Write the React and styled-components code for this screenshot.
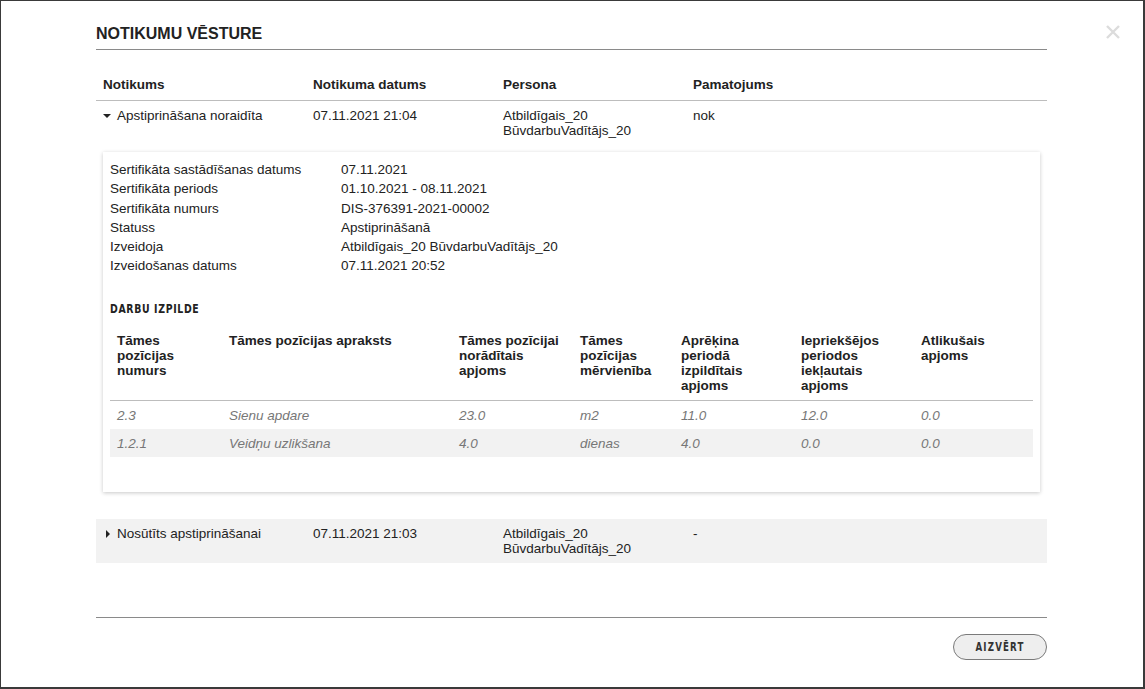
import React from "react";
import styled, { createGlobalStyle } from "styled-components";

const Global = createGlobalStyle`
  html, body { margin: 0; padding: 0; background: #fff; }
  body { font-family: "Liberation Sans", Arial, sans-serif; color: #222; }
  * { box-sizing: border-box; }
`;

const Frame = styled.div`
  width: 1145px;
  height: 689px;
  border-style: solid;
  border-color: #3a3a3a;
  border-width: 1px 2px 2px 1px;
  background: #fff;
  position: relative;
  padding: 0 96px 0 95px;
  display: flex;
  flex-direction: column;
  overflow: hidden;
`;

const Title = styled.h2`
  margin: 0;
  padding-top: 23px;
  height: 49px;
  font-size: 16px;
  font-weight: bold;
  color: #222;
  line-height: 20px;
  border-bottom: 1px solid #8a8a8a;
`;

const Close = styled.button`
  position: absolute;
  top: 23px;
  right: 22px;
  width: 16px;
  height: 16px;
  padding: 0;
  border: none;
  background: transparent;
  cursor: pointer;
`;

const Grid = styled.div`
  display: grid;
  grid-template-columns: 210px 190px 190px 1fr;
  font-size: 13.5px;
  line-height: 15px;
  background: ${(p) => (p.$shaded ? "#f2f2f2" : "transparent")};
  border-bottom: ${(p) => (p.$head ? "1px solid #bdbdbd" : "none")};
  margin-top: ${(p) => (p.$head ? "20px" : "0")};
  font-weight: ${(p) => (p.$head ? "bold" : "normal")};
`;

const Cell = styled.div`
  padding: 7px 7px;
  min-height: 44px;
  ${(p) => p.$head && "min-height: 0; padding: 7px 7px 8px;"}
  display: flex;
  align-items: flex-start;
  gap: 4px;
`;

const Caret = styled.span`
  display: inline-block;
  width: 10px;
  height: 15px;
  flex: none;
  position: relative;
  &::before {
    content: "";
    position: absolute;
    ${(p) =>
      p.$open
        ? `left: 0; top: 6px; border-left: 4px solid transparent; border-right: 4px solid transparent; border-top: 4px solid #222;`
        : `left: 3px; top: 4px; border-top: 4px solid transparent; border-bottom: 4px solid transparent; border-left: 4px solid #222;`}
  }
`;

const Card = styled.div`
  margin: 7px 7px 27px;
  background: #fff;
  box-shadow: 0 1px 4px rgba(0, 0, 0, 0.22);
  padding: 8px 7px 35px;
`;

const InfoGrid = styled.div`
  display: grid;
  grid-template-columns: 231px 1fr;
  font-size: 13.5px;
  line-height: 19.3px;
  color: #222;
`;

const Condensed = styled.span`
  display: inline-block;
  font-family: "DejaVu Sans", sans-serif;
  font-weight: bold;
  transform: scaleX(0.72);
  transform-origin: ${(p) => (p.$center ? "center" : "left")} center;
  white-space: nowrap;
`;

const SectionTitle = styled.div`
  margin-top: 26px;
  font-size: 13px;
  letter-spacing: 0.9px;
  line-height: 14px;
  color: #222;
`;

const WorkTable = styled.div`
  margin-top: 10px;
  display: grid;
  grid-template-columns: 112px 230px 121px 101px 120px 120px 1fr;
  font-size: 13.5px;
  line-height: 15px;
`;

const Th = styled.div`
  font-weight: bold;
  padding: 7px 7px 7px;
  border-bottom: 1px solid #bdbdbd;
  color: #222;
`;

const Td = styled.div`
  font-style: italic;
  color: #777;
  padding: 7px 7px 6px;
  height: 28px;
  background: ${(p) => (p.$shaded ? "#f2f2f2" : "transparent")};
`;

const Spacer = styled.div`
  flex: 1;
`;

const Footer = styled.div`
  border-top: 1px solid #8a8a8a;
  height: 70px;
  display: flex;
  justify-content: flex-end;
  align-items: flex-start;
  padding-top: 16px;
`;

const Button = styled.button`
  width: 94px;
  height: 26px;
  border-radius: 13px;
  border: 1px solid #7a7a7a;
  background: #eeeeee;
  font-size: 12px;
  letter-spacing: 1.6px;
  color: #333;
  padding: 0;
  cursor: pointer;
  display: flex;
  align-items: center;
  justify-content: center;
`;

const info = [
  ["Sertifikāta sastādīšanas datums", "07.11.2021"],
  ["Sertifikāta periods", "01.10.2021 - 08.11.2021"],
  ["Sertifikāta numurs", "DIS-376391-2021-00002"],
  ["Statuss", "Apstiprināšanā"],
  ["Izveidoja", "Atbildīgais_20 BūvdarbuVadītājs_20"],
  ["Izveidošanas datums", "07.11.2021 20:52"],
];

const heads = [
  ["Tāmes", "pozīcijas", "numurs"],
  ["Tāmes pozīcijas apraksts"],
  ["Tāmes pozīcijai", "norādītais", "apjoms"],
  ["Tāmes", "pozīcijas", "mērvienība"],
  ["Aprēķina", "periodā", "izpildītais", "apjoms"],
  ["Iepriekšējos", "periodos", "iekļautais", "apjoms"],
  ["Atlikušais", "apjoms"],
];

const rows = [
  ["2.3", "Sienu apdare", "23.0", "m2", "11.0", "12.0", "0.0"],
  ["1.2.1", "Veidņu uzlikšana", "4.0", "dienas", "4.0", "0.0", "0.0"],
];

export default function App() {
  return (
    <>
      <Global />
      <Frame>
        <Title>NOTIKUMU VĒSTURE</Title>
        <Close aria-label="Aizvērt">
          <svg width="16" height="16" viewBox="0 0 16 16">
            <path d="M2 2L14 14M14 2L2 14" stroke="#dcdcdc" strokeWidth="2.4" />
          </svg>
        </Close>

        <Grid $head>
          <Cell $head>Notikums</Cell>
          <Cell $head>Notikuma datums</Cell>
          <Cell $head>Persona</Cell>
          <Cell $head>Pamatojums</Cell>
        </Grid>

        <Grid>
          <Cell>
            <Caret $open />
            <span>Apstiprināšana noraidīta</span>
          </Cell>
          <Cell>07.11.2021 21:04</Cell>
          <Cell>
            Atbildīgais_20
            <br />
            BūvdarbuVadītājs_20
          </Cell>
          <Cell>nok</Cell>
        </Grid>

        <Card>
          <InfoGrid>
            {info.map(([k, v]) => (
              <React.Fragment key={k}>
                <div>{k}</div>
                <div>{v}</div>
              </React.Fragment>
            ))}
          </InfoGrid>
          <SectionTitle>
            <Condensed>DARBU IZPILDE</Condensed>
          </SectionTitle>
          <WorkTable>
            {heads.map((h, i) => (
              <Th key={i}>
                {h.map((l, j) => (
                  <div key={j}>{l}</div>
                ))}
              </Th>
            ))}
            {rows.map((r, ri) =>
              r.map((c, ci) => (
                <Td key={ri + "-" + ci} $shaded={ri % 2 === 1}>
                  {c}
                </Td>
              ))
            )}
          </WorkTable>
        </Card>

        <Grid $shaded>
          <Cell>
            <Caret />
            <span>Nosūtīts apstiprināšanai</span>
          </Cell>
          <Cell>07.11.2021 21:03</Cell>
          <Cell>
            Atbildīgais_20
            <br />
            BūvdarbuVadītājs_20
          </Cell>
          <Cell>-</Cell>
        </Grid>

        <Spacer />
        <Footer>
          <Button>
            <Condensed $center>AIZVĒRT</Condensed>
          </Button>
        </Footer>
      </Frame>
    </>
  );
}
